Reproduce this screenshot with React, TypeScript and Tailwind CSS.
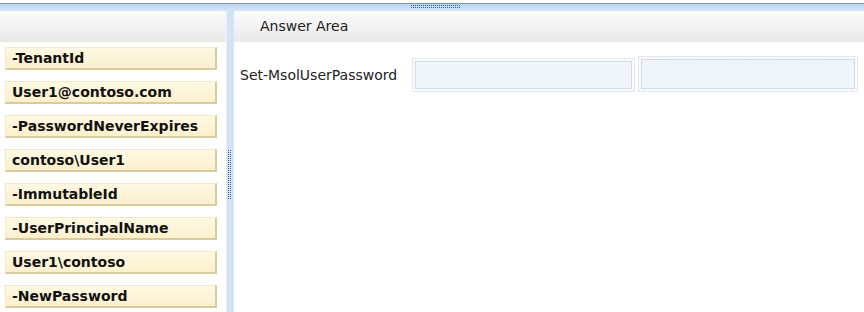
import React from "react";

const items = [
  "-TenantId",
  "User1@contoso.com",
  "-PasswordNeverExpires",
  "contoso\\User1",
  "-ImmutableId",
  "-UserPrincipalName",
  "User1\\contoso",
  "-NewPassword",
];

function Grip({ vertical }: { vertical?: boolean }) {
  if (vertical) {
    return (
      <svg width="4" height="50" viewBox="0 0 4 50">
        {Array.from({ length: 25 }).map((_, i) => (
          <g key={i}>
            <rect x="0" y={i * 2} width="1" height="1" fill="#3a5a8a" />
            <rect x="2" y={i * 2} width="1" height="1" fill="#3a5a8a" />
          </g>
        ))}
      </svg>
    );
  }
  return (
    <svg width="50" height="4" viewBox="0 0 50 4">
      {Array.from({ length: 25 }).map((_, i) => (
        <g key={i}>
          <rect x={i * 2} y="0" width="1" height="1" fill="#3a5a8a" />
          <rect x={i * 2} y="2" width="1" height="1" fill="#3a5a8a" />
        </g>
      ))}
    </svg>
  );
}

export default function App() {
  return (
    <div
      className="w-[864px] h-[312px] bg-white overflow-hidden flex flex-col"
      style={{ fontFamily: "Verdana, 'DejaVu Sans', sans-serif" }}
    >
      <div className="h-[3px] bg-white" />
      <div className="h-[1px] bg-[#7f93a6]" />
      <div className="h-[7px] bg-gradient-to-b from-[#b9d6f3] to-[#d3e6f8] flex items-start pl-[411px] pt-[1px]">
        <Grip />
      </div>
      <div className="flex flex-1 min-h-0">
        <div className="w-[226px] flex flex-col">
          <div className="h-[31px] bg-gradient-to-b from-[#fbfbfb] to-[#e9e9e9]" />
          <div className="flex flex-col gap-[11px] pt-[5px] pl-[5px]">
            {items.map((t) => (
              <div
                key={t}
                className="w-[212px] h-[23px] bg-gradient-to-b from-[#fff9e4] to-[#fcf0cc] border-l border-t border-[#f2e8c8] border-r-2 border-b-2 border-r-[#d9cba0] border-b-[#d9cba0] flex items-center pl-[6px] text-[14px] font-bold text-[#111] leading-none whitespace-nowrap"
              >
                {t}
              </div>
            ))}
          </div>
        </div>
        <div className="w-[8px] bg-[#d2e4f8] border-l border-[#e6f0fb] flex flex-col items-center pt-[139px]">
          <div className="ml-[-1px]">
            <Grip vertical />
          </div>
        </div>
        <div className="flex-1 flex flex-col">
          <div className="h-[31px] bg-gradient-to-b from-[#fbfbfb] to-[#e9e9e9] flex items-center pl-[26px] text-[14px] text-[#222]">
            Answer Area
          </div>
          <div className="flex items-start pt-[16px] pl-[6px]">
            <div className="text-[14px] text-[#222] mt-[7px] w-[172px] whitespace-nowrap">
              Set-MsolUserPassword
            </div>
            <div className="w-[223px]">
              <div className="h-[34px] p-[2px] border border-[#e4e9f0] bg-[#f7fafd]">
                <div className="h-full border border-[#d3dbe6] bg-gradient-to-r from-[#f0f5fc] via-[#edf7fd] to-[#f0f5fc]" />
              </div>
            </div>
            <div className="w-[220px] ml-[3px] mt-[-2px]">
              <div className="h-[36px] p-[2px] border border-[#e4e9f0] bg-[#f7fafd]">
                <div className="h-full border border-[#d3dbe6] bg-gradient-to-r from-[#f0f5fc] via-[#edf7fd] to-[#f0f5fc]" />
              </div>
            </div>
          </div>
        </div>
      </div>
    </div>
  );
}
